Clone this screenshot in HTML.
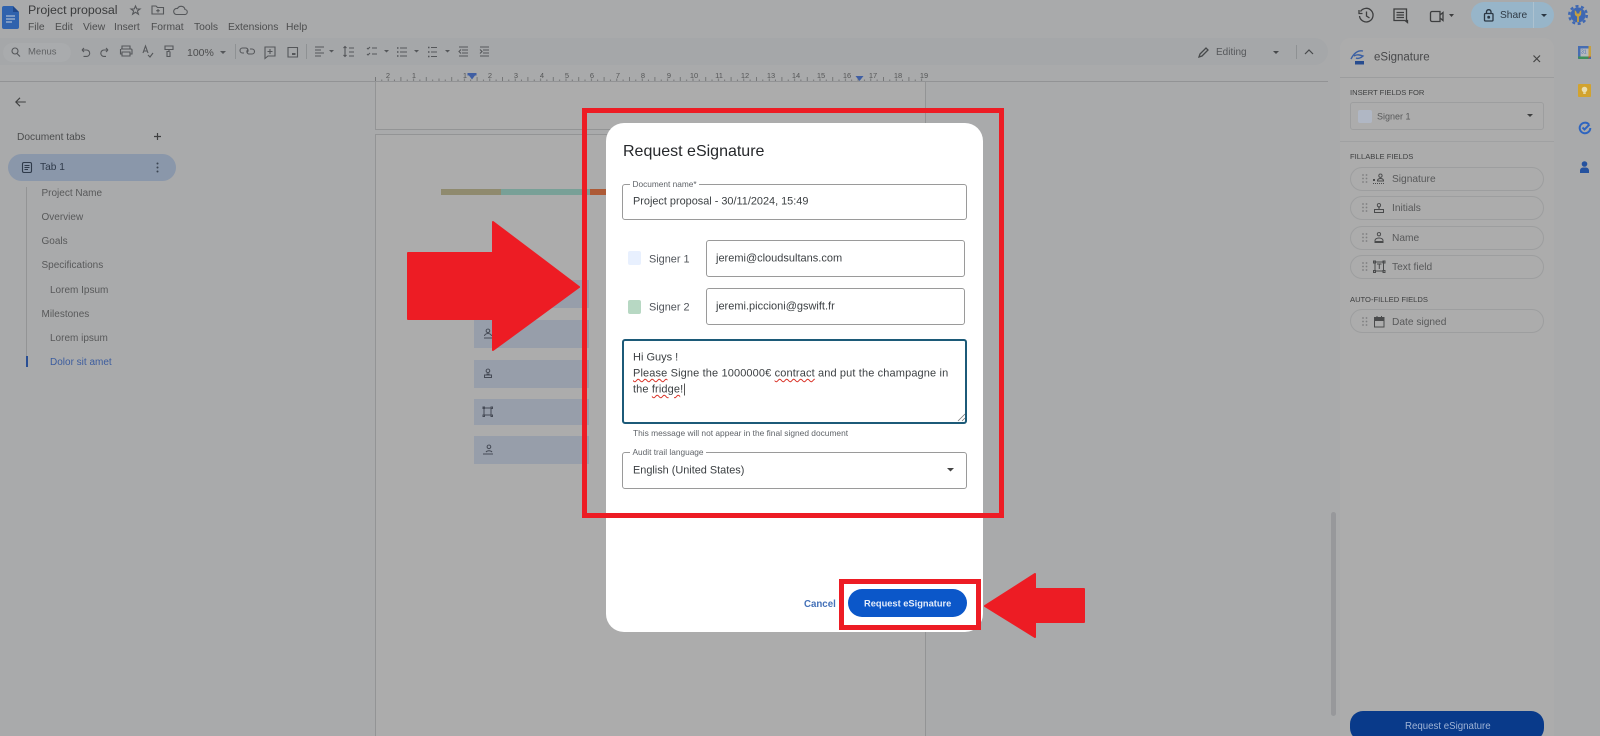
<!DOCTYPE html>
<html><head><meta charset="utf-8"><title>Request eSignature</title>
<style>
html,body{margin:0;padding:0;width:1600px;height:736px;overflow:hidden;background:#a9aaab;font-family:"Liberation Sans",sans-serif}
#bg{position:absolute;left:0;top:0;width:1600px;height:736px;overflow:hidden;filter:blur(.35px)}
.a{position:absolute;box-sizing:border-box}
.t{position:absolute;white-space:nowrap;line-height:1;transform:translateY(-50%);color:#555657}
svg{position:absolute;overflow:visible}
.m{font-size:10.3px;top:28px;color:#4c4d4e}
.o{font-size:10px;color:#58595a}
.pill{position:absolute;left:1350px;width:194px;height:24px;border:1px solid #9d9e9f;border-radius:12px;box-sizing:border-box}
.lab{font-size:7.6px;color:#3f4041}
.ft{font-size:10.2px;color:#58595a;left:1392px}
.bar{position:absolute;left:474px;width:115px;background:#979eaa}
.fld{position:absolute;background:#fff;border:1px solid #9a9a9a;border-radius:3px;box-sizing:border-box}
.d{color:#3c4043;font-size:10.9px}
.small{font-size:8.3px;color:#5f6368;background:#fff;padding:0 2.5px}
u{text-decoration:underline wavy #d93025 1px;text-underline-offset:1.5px}
</style></head><body>
<div id="bg">
<!-- toolbar -->
<div class="a" style="left:0;top:38px;width:1328px;height:27px;background:#a5a7a9;border-radius:0 14px 14px 0"></div>
<div class="a" style="left:3px;top:43px;width:68px;height:19px;background:#a9abad;border-radius:10px"></div>
<!-- logo -->
<svg style="left:2px;top:6px" width="17" height="23" viewBox="0 0 17 23"><path d="M2 0h9l6 6v15a2 2 0 0 1-2 2H2a2 2 0 0 1-2-2V2a2 2 0 0 1 2-2z" fill="#2f62ad"/><path d="M11 0l6 6h-6z" fill="#20488a"/><path d="M4 10h9M4 13h9M4 16h6" stroke="#a9bad3" stroke-width="1.2"/></svg>
<div class="t" style="left:28px;top:10px;font-size:12.4px;color:#3a3b3c">Project proposal</div>
<div class="t m" style="left:28px">File</div><div class="t m" style="left:55px">Edit</div><div class="t m" style="left:83px">View</div><div class="t m" style="left:114px">Insert</div><div class="t m" style="left:151px">Format</div><div class="t m" style="left:194px">Tools</div><div class="t m" style="left:228px">Extensions</div><div class="t m" style="left:286px">Help</div>
<svg style="left:0;top:0" width="1330" height="70" fill="none" stroke="#55575a" stroke-width="1.1">
<path d="M135.500 6l1.300 3h3.200l-2.600 2 1 3.200-2.900-1.900-2.900 1.900 1-3.200-2.600-2h3.200z"/>
<path d="M152 6h4l1.500 1.500h6v6.500h-11.500zM158 9v3.500M156.200 10.700h3.500"/>
<path d="M176 14.500h8.500a2.500 2.500 0 0 0 .5-5 4 4 0 0 0-7.500-1 3 3 0 0 0-1.500 6z"/>
<circle cx="15" cy="51" r="3"/><path d="M17 53.500l3 3"/>
<path d="M82 50h4.500a3.200 3.200 0 0 1 0 6.400h-3M82 50l2-2M82 50l2 2"/>
<path d="M108 50h-4a3.200 3.200 0 0 0 0 6.400h2M108 50l-2-2M108 50l-2 2"/>
<path d="M122 49v-3h8v3M121 49h10a1 1 0 0 1 1 1v4h-2M122 54h-1.500v-5M122 52h8v4h-8z"/>
<path d="M143 53l2.500-7 2.500 7M144 51h3M148 55l2 2 3-4"/>
<path d="M165 46h8v3.500h-8zM169 49.500v2h-2v5h3v-5"/>
<path d="M244 53h-1.500a2.500 2.500 0 0 1 0-5h3.500a2.500 2.500 0 0 1 1 4.500M250 49h2a2.500 2.500 0 0 1 0 5h-3.500a2.500 2.500 0 0 1-1-4"/>
<path d="M265 47h10v9h-7l-3 2.500zM270 49v5M267.500 51.500h5"/>
<path d="M288 47.500h9.500v9.500h-9.500z"/><path d="M292 54h3.500" stroke-width="2"/>
<path d="M315 47h9M315 50h6M315 53h9M315 56h6"/><path d="M345 47v9M343.500 48l1.500-1.500 1.500 1.500M343.500 55l1.500 1.500 1.500-1.500M349 48h5M349 52h5M349 56h5"/>
<path d="M367 48l1 1 2-2M367 54l1 1 2-2M372 48h5M372 54h5M400 48h7M400 52h7M400 56h7M431 47.500h6M431 52h6M431 56.500h6"/>
<path d="M397 48h1.500M397 52h1.500M397 56h1.500M428 47.500h1.500M428 52h1.500M428 56.500h1.500" stroke-width="1.500"/>
<path d="M459 47h9M462 50h6M462 53h6M459 56h9M461 49.500l-2 2 2 2M480 47h9M483 50h6M483 53h6M480 56h9M480 49.500l2 2-2 2"/>
<path d="M235.500 44v15M306.500 44v15" stroke="#8e9193" stroke-width="1"/>
</svg>
<svg style="left:0;top:0" width="1330" height="70" fill="#55575a"><path d="M220 51h6l-3 3zM329 50h5l-2.500 2.500zM384 50h5l-2.500 2.500zM414 50h5l-2.500 2.500zM445 50h5l-2.500 2.500z"/></svg>
<div class="t" style="left:28px;top:52px;font-size:9.500px;color:#606264">Menus</div>
<div class="t" style="left:187px;top:52.500px;font-size:10.500px;color:#4c4d4e">100%</div>
<!-- editing -->
<svg style="left:1197px;top:45px" width="14" height="14" fill="none" stroke="#47494b" stroke-width="1.300"><path d="M2 12l1-3 6-6 2 2-6 6z"/></svg>
<div class="t" style="left:1216px;top:53px;font-size:10px;color:#55575a">Editing</div>
<svg style="left:1273px;top:51px" width="8" height="5" fill="#47494b"><path d="M0 0h6l-3 3z"/></svg>
<div class="a" style="left:1296px;top:45px;width:1px;height:14px;background:#8e9193"></div>
<svg style="left:1304px;top:49px" width="12" height="8" fill="none" stroke="#47494b" stroke-width="1.200"><path d="M1 5l4-4 4 4"/></svg>
<!-- ruler line -->
<div class="a" style="left:0;top:81px;width:1328px;height:1px;background:#929395"></div>
<svg style="left:375px;top:70px" width="552" height="12"><defs><pattern id="rp" width="25.4" height="12" patternUnits="userSpaceOnUse" x="0"><path d="M.5 7v4M6.800 9.500v1.500M13.200 8.500v2.500M19.500 9.500v1.500" stroke="#6a6b6c" stroke-width=".8"/></pattern></defs><rect width="552" height="12" fill="url(#rp)"/></svg>
<svg style="left:0;top:0" width="1000" height="90" font-family="Liberation Sans" font-size="7.500" fill="#555657" text-anchor="middle">
<text x="388" y="78">2</text><text x="414" y="78">1</text><text x="465" y="78">1</text><text x="490" y="78">2</text><text x="516" y="78">3</text><text x="542" y="78">4</text><text x="567" y="78">5</text><text x="592" y="78">6</text><text x="618" y="78">7</text><text x="643" y="78">8</text><text x="669" y="78">9</text><text x="694" y="78">10</text><text x="719" y="78">11</text><text x="745" y="78">12</text><text x="771" y="78">13</text><text x="796" y="78">14</text><text x="821" y="78">15</text><text x="847" y="78">16</text><text x="873" y="78">17</text><text x="898" y="78">18</text><text x="924" y="78">19</text>
<path d="M467.500 73h9v2.500h-1.500l-3 4-3-4h-1.500zM855.500 76h8l-4 5z" fill="#3f5ea3"/>
</svg>
<!-- pages -->
<div class="a" style="left:375px;top:82px;width:551px;height:48px;background:#acacac;border-left:1px solid #939495;border-right:1px solid #939495;border-bottom:1px solid #939495"></div>
<div class="a" style="left:375px;top:134px;width:551px;height:602px;background:#acacac;border:1px solid #939495;border-bottom:0"></div>
<div class="a" style="left:441px;top:189px;width:60px;height:6px;background:#8f8a6e"></div>
<div class="a" style="left:501px;top:189px;width:89px;height:6px;background:#78a097"></div>
<div class="a" style="left:590px;top:189px;width:16px;height:6px;background:#ad5a36"></div>
<div class="bar" style="top:280px;height:28px"></div><div class="bar" style="top:320px;height:28px"></div><div class="bar" style="top:360px;height:28px"></div><div class="bar" style="top:399px;height:26px"></div><div class="bar" style="top:436px;height:28px"></div>
<svg style="left:483px;top:328px" width="12" height="130" fill="none" stroke="#454a55" stroke-width="1"><path d="M5 1a1.800 1.800 0 1 1-.1 0M1.500 8a3.500 2.500 0 0 1 7 0M1 10h8"/><path d="M5 41a1.800 1.800 0 1 1-.1 0M3.500 46h3M1.500 47h7v2.500h-7z"/><path d="M1 80h7v7h-7zM0 79h1.500v1.500H0zM8 79h1.500v1.500H8zM0 87h1.500v1.500H0zM8 87h1.500v1.500H8z"/><path d="M6 117a1.800 1.800 0 1 1-.1 0M3 124a3.500 2.500 0 0 1 6 0M0 126h10"/></svg>
<!-- left outline -->
<svg style="left:15px;top:97px" width="11" height="10" fill="none" stroke="#3f4041" stroke-width="1.100"><path d="M.8 5h10M5 .8L.8 5 5 9.200"/></svg>
<div class="t" style="left:17px;top:137.500px;font-size:10.200px;color:#4c4d4e">Document tabs</div>
<svg style="left:153.500px;top:132.500px" width="8" height="8" stroke="#3f4041" stroke-width="1.200"><path d="M3.500 0v7M0 3.500h7"/></svg>
<div class="a" style="left:8px;top:154px;width:168px;height:27px;background:#8a97aa;border-radius:14px"></div>
<svg style="left:22px;top:162px" width="10" height="11" fill="none" stroke="#2f3a4a" stroke-width="1.100"><rect x=".5" y=".5" width="9" height="10" rx="1.500"/><path d="M2.500 3.500h5M2.500 5.500h5M2.500 7.500h3.500"/></svg>
<div class="t" style="left:40px;top:168px;font-size:10.200px;color:#2f3a4a">Tab 1</div>
<svg style="left:156px;top:162px" width="3" height="11" fill="#3c4452"><circle cx="1.500" cy="1.500" r="1"/><circle cx="1.500" cy="5.500" r="1"/><circle cx="1.500" cy="9.500" r="1"/></svg>
<div class="a" style="left:26px;top:187px;width:1px;height:169px;background:#939495"></div>
<div class="a" style="left:26px;top:356px;width:2px;height:11px;background:#2a4f94"></div>
<div class="t o" style="left:41.500px;top:194px">Project Name</div><div class="t o" style="left:41.500px;top:217.500px">Overview</div><div class="t o" style="left:41.500px;top:241.500px">Goals</div><div class="t o" style="left:41.500px;top:266px">Specifications</div><div class="t o" style="left:50px;top:290.500px">Lorem Ipsum</div><div class="t o" style="left:41.500px;top:314.500px">Milestones</div><div class="t o" style="left:50px;top:338.500px">Lorem ipsum</div><div class="t o" style="left:50px;top:362.500px;color:#3c5c9e">Dolor sit amet</div>
<!-- top right -->
<svg style="left:1358px;top:7px" width="100" height="18" fill="none" stroke="#3d3e3f" stroke-width="1.300"><path d="M2.500 4.500a6.800 6.800 0 1 1-1 4.500M1 3v3.500h3.500M8.500 4.500v4.500l3 2"/><path d="M36 2h12.500v11.500h1v2l-2.500-2h-11zM38.500 5.500h7.500M38.500 8h7.500M38.500 10.500h7.500"/><path d="M74 4.500h8v10h-8a1.500 1.500 0 0 1-1.500-1.500V6A1.500 1.500 0 0 1 74 4.500zM82 8l3-2.500v8L82 11"/></svg>
<svg style="left:1449px;top:14px" width="6" height="4" fill="#3d3e3f"><path d="M0 0h5l-2.500 3z"/></svg>
<div class="a" style="left:1471px;top:2px;width:83px;height:26px;background:#97b5c9;border-radius:13px"></div>
<div class="a" style="left:1533px;top:2px;width:1px;height:26px;background:#adc2d0"></div>
<svg style="left:1483px;top:8px" width="12" height="14" fill="none" stroke="#2b3743" stroke-width="1.300"><rect x="1.500" y="5.500" width="8.500" height="7.500" rx="1"/><path d="M3.500 5.500V3.500a2.300 2.300 0 0 1 4.500 0v2"/><circle cx="5.700" cy="9.200" r=".8" fill="#2b3743"/></svg>
<div class="t" style="left:1500px;top:16px;font-size:10.200px;color:#2f3a45">Share</div>
<svg style="left:1541px;top:14px" width="6" height="4" fill="#2b3743"><path d="M0 0h6l-3 3z"/></svg>
<svg style="left:1568px;top:5px" width="20" height="20"><circle cx="10" cy="10" r="7.500" fill="#3f68b2"/><circle cx="10" cy="10" r="8.800" fill="none" stroke="#3f68b2" stroke-width="2.400" stroke-dasharray="3 2.530"/><path d="M6.800 5v3.500a3.200 3.200 0 0 0 2.300 3V17h1.800v-5.500a3.200 3.200 0 0 0 2.300-3V5l-1.800 2v1.500h-2.800V7z" fill="#c7a03f"/></svg>
<!-- right side panel -->
<div class="a" style="left:1340px;top:38px;width:214px;height:698px;background:#acacac;border-radius:10px 10px 0 0"></div>
<div class="a" style="left:1340px;top:77px;width:214px;height:1px;background:#9c9d9e"></div>
<div class="a" style="left:1340px;top:141px;width:214px;height:1px;background:#a0a1a2"></div>
<svg style="left:1350px;top:49px" width="17" height="16" fill="none"><path d="M1 10C4 4 8 1 13 2M4 7c3-2 6-1 9 0-2 2-5 3-7 2" stroke="#3a5fa3" stroke-width="1.400"/><rect x="5" y="12" width="9" height="3.500" fill="#274c8f"/></svg>
<div class="t" style="left:1374px;top:58px;font-size:11.500px;color:#47484a">eSignature</div>
<svg style="left:1533px;top:55px" width="8" height="8" stroke="#444" stroke-width="1.200"><path d="M.5.500l6.500 6.500M7 .5L.5 7"/></svg>
<div class="t lab" style="left:1350px;top:93px">INSERT FIELDS FOR</div>
<div class="a" style="left:1350px;top:102px;width:194px;height:28px;border:1px solid #9d9e9f;border-radius:3px"></div>
<div class="a" style="left:1358px;top:110px;width:14px;height:13px;background:#b0b7c4;border-radius:2px"></div>
<div class="t" style="left:1377px;top:117px;font-size:9px;color:#58595a">Signer 1</div>
<svg style="left:1527px;top:114px" width="7" height="4" fill="#3d3e3f"><path d="M0 0h6l-3 3z"/></svg>
<div class="t lab" style="left:1350px;top:157px">FILLABLE FIELDS</div>
<div class="pill" style="top:167px"></div><div class="pill" style="top:196px"></div><div class="pill" style="top:226px"></div><div class="pill" style="top:255px"></div>
<div class="t lab" style="left:1350px;top:300px">AUTO-FILLED FIELDS</div>
<div class="pill" style="top:309px"></div>
<div class="t ft" style="top:179.500px">Signature</div><div class="t ft" style="top:208.500px">Initials</div><div class="t ft" style="top:238.500px">Name</div><div class="t ft" style="top:267.500px">Text field</div><div class="t ft" style="top:322.500px">Date signed</div>
<svg style="left:1362px;top:165px" width="6" height="170" fill="#7e7f80"><g id="g1"><circle cx="1" cy="10" r=".9"/><circle cx="4.500" cy="10" r=".9"/><circle cx="1" cy="13.500" r=".9"/><circle cx="4.500" cy="13.500" r=".9"/><circle cx="1" cy="17" r=".9"/><circle cx="4.500" cy="17" r=".9"/></g><use href="#g1" y="29"/><use href="#g1" y="59"/><use href="#g1" y="88"/><use href="#g1" y="143"/></svg>
<svg style="left:1373px;top:173px" width="14" height="160" fill="none" stroke="#4a4b4c" stroke-width="1">
<path d="M7.500 1a1.700 1.700 0 1 1-.1 0M4.500 7.500a3 2 0 0 1 6 0v.5h-6z"/><path d="M0 10.500h12" stroke-dasharray="1 1"/><rect x="0" y="6" width="2" height="2" fill="#4a4b4c" stroke="none"/>
<path d="M6 30.500a1.700 1.700 0 1 1-.1 0M5 35h2M1.500 36.500h9v3h-9z"/>
<path d="M6 59.500a1.700 1.700 0 1 1-.1 0M2 67.500a4 2.500 0 0 1 8 0v1h-8zM1.500 69.500h9"/>
<path d="M2 89h8.500v9H2zM.5 88h2v2h-2zM10 88h2v2h-2zM.5 97.500h2v2h-2zM10 97.500h2v2h-2zM4 91h4.500M6.300 91v5"/>
<path d="M1.500 145h9.500v9H1.500z"/><path d="M1.500 144.500h9.500v3H1.500z" fill="#4a4b4c"/><path d="M4 143v2M8.500 143v2"/></svg>
<!-- side icons -->
<svg style="left:1578px;top:46px" width="14" height="14"><rect width="13" height="13" fill="#466db2"/><rect x="2.500" y="2.500" width="8" height="8" fill="#b6b9bd"/><path d="M0 10.500h10.500V13H2a2 2 0 0 1-2-2z" fill="#3e8f5a"/><path d="M10.500 10.500H13L10.500 13z" fill="#b4503c"/><path d="M10.500 0H13v10.500h-2.500z" fill="#c7a03f"/></svg>
<div class="t" style="left:1581px;top:53px;font-size:5px;color:#466db2">31</div>
<svg style="left:1578px;top:84px" width="14" height="14"><rect width="13" height="13" rx="1" fill="#d2a32e"/><circle cx="6.500" cy="5.500" r="2.800" fill="#e9ddb0"/><rect x="5.200" y="8.300" width="2.600" height="1.600" fill="#e9ddb0"/></svg>
<svg style="left:1578px;top:121px" width="14" height="14" fill="none" stroke="#2f65bf" stroke-width="2"><path d="M11 3.500a5.300 5.300 0 1 0 1.300 3.500"/><path d="M4.500 6.500l2 2 5-5"/></svg>
<svg style="left:1579px;top:161px" width="11" height="13" fill="#25529f"><circle cx="5.500" cy="3" r="2.800"/><path d="M1 12v-2.500a3 3 0 0 1 3-3h3a3 3 0 0 1 3 3V12z"/></svg>
<!-- scrollbar -->
<div class="a" style="left:1331px;top:512px;width:5px;height:204px;background:#97989b;border-radius:3px"></div>
<div class="a" style="left:1350px;top:711px;width:194px;height:30px;background:#093a8a;border-radius:13px"></div>
<div class="t" style="left:1405px;top:726.500px;font-size:9.700px;color:#a0b4d6">Request eSignature</div>
</div>
<!-- modal -->
<div class="a" style="left:606px;top:123px;width:377px;height:509px;background:#fff;border-radius:18px"></div>
<div class="t" style="left:623px;top:152px;font-size:16px;color:#26282b">Request eSignature</div>
<div class="fld" style="left:622px;top:184px;width:345px;height:36px"></div>
<div class="t small" style="left:630px;top:184px">Document name*</div>
<div class="t d" style="left:633px;top:202px">Project proposal - 30/11/2024, 15:49</div>
<div class="a" style="left:628px;top:251px;width:13px;height:14px;background:#e8f0fe;border-radius:2px"></div>
<div class="t d" style="left:649px;top:259.500px;color:#50545a">Signer 1</div>
<div class="fld" style="left:706px;top:240px;width:259px;height:37px"></div>
<div class="t d" style="left:716px;top:258.500px;font-size:11px">jeremi@cloudsultans.com</div>
<div class="a" style="left:628px;top:300px;width:13px;height:14px;background:#b7d8c3;border-radius:2px"></div>
<div class="t d" style="left:649px;top:308px;color:#50545a">Signer 2</div>
<div class="fld" style="left:706px;top:288px;width:259px;height:37px"></div>
<div class="t d" style="left:716px;top:307px;font-size:11px">jeremi.piccioni@gswift.fr</div>
<div class="a" style="left:622px;top:339px;width:345px;height:85px;background:#fff;border:2px solid #1c5a78;border-radius:3px"></div>
<div class="t d" style="left:633px;top:358px;font-size:11px">Hi Guys !</div>
<div class="t d" style="left:633px;top:373.500px;font-size:11px;letter-spacing:.13px"><u>Please</u> Signe the 1000000€ <u>contract</u> and put the champagne in</div>
<div class="t d" style="left:633px;top:389.500px;font-size:11px;letter-spacing:.13px">the <u>fridge</u>!<span style="border-left:1px solid #555;margin-left:1px"></span></div>
<svg style="left:958px;top:414px" width="8" height="8" stroke="#777" stroke-width=".8"><path d="M0 7l7-7M4 7l3-3"/></svg>
<div class="t" style="left:633px;top:433px;font-size:8.400px;color:#5f6368">This message will not appear in the final signed document</div>
<div class="fld" style="left:622px;top:452px;width:345px;height:37px"></div>
<div class="t small" style="left:630px;top:452px">Audit trail language</div>
<div class="t d" style="left:633px;top:470.500px">English (United States)</div>
<svg style="left:947px;top:468px" width="8" height="5" fill="#444"><path d="M0 0h7l-3.500 3.500z"/></svg>
<div class="t" style="left:804px;top:604.500px;font-size:9.700px;font-weight:bold;color:#4471b8">Cancel</div>
<div class="a" style="left:848px;top:589px;width:119px;height:28px;background:#0b57c9;border-radius:14px"></div>
<div class="t" style="left:864px;top:604px;font-size:9.300px;font-weight:bold;color:#e5edfa">Request eSignature</div>
<!-- annotations -->
<div class="a" style="left:582px;top:108px;width:422px;height:410px;border:5px solid #ed1c24"></div>
<div class="a" style="left:839px;top:579px;width:142px;height:51px;border:5px solid #ed1c24"></div>
<svg style="left:0;top:0" width="1600" height="736" fill="#ed1c24" stroke="#ed1c24" stroke-linejoin="round" stroke-width="2"><path d="M408 253H493V222L579 287 493 350V319H408z"/><path d="M985 606L1035 574V589H1084V622H1035V637z"/></svg>
</body></html>
